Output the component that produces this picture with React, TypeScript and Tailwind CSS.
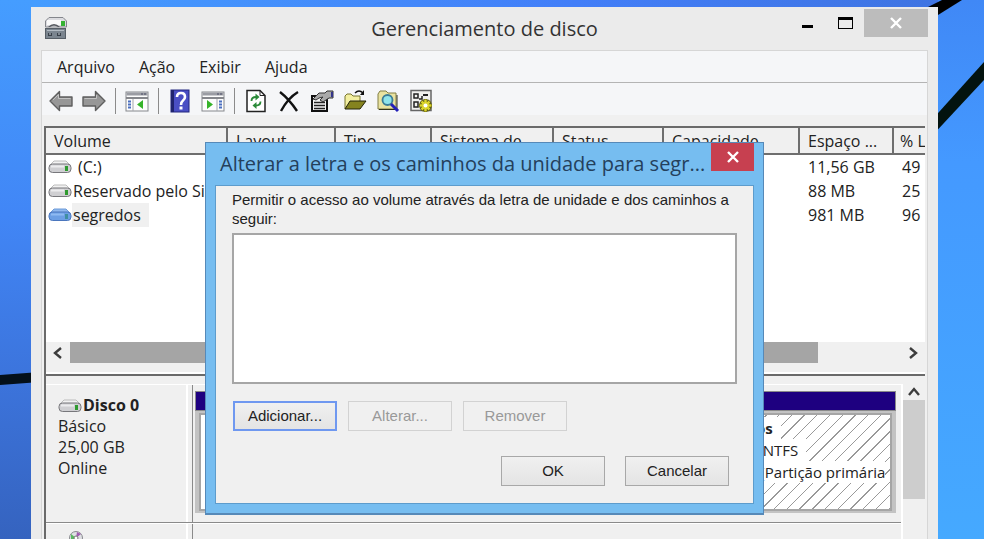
import React from 'react';

const VOLUMES = [
  { name: '(C:)', free: '11,56 GB', percent: '49', blue: false, selected: false },
  { name: 'Reservado pelo Sis', free: '88 MB', percent: '25', blue: false, selected: false },
  { name: 'segredos', free: '981 MB', percent: '96', blue: true, selected: true },
];

const DriveIcon: React.FC<{ blue?: boolean }> = ({ blue }) => (
  <svg className="h-4 w-6 shrink-0" viewBox="0 0 24 16" aria-hidden="true">
    <path d="M6 2 H18 L22 6 H2 Z" fill={blue ? '#8fb8ee' : '#f2f2f2'} stroke={blue ? '#6f9bd8' : '#bcbcbc'} />
    <rect x="1" y="5" width="22" height="8.500" rx="3.500" fill={blue ? '#6c9fe4' : '#cfcfd2'} stroke={blue ? '#4a76bd' : '#77777b'} />
    <path d="M3 7.500 H16" stroke={blue ? '#8fbaf2' : '#ececee'} strokeWidth="2" />
    <rect x="17" y="7" width="3" height="5" fill={blue ? '#3f8fa0' : '#2f9a2f'} />
  </svg>
);

const DiskStackIcon = () => (
  <svg className="h-6 w-6" viewBox="0 0 24 24" aria-hidden="true">
    <path d="M5 1.500 H19 L22.500 5 V11 H1.500 V5 Z" fill="#dcdce0" stroke="#84868c" />
    <path d="M3 4 H17 V9 H3 Z" fill="#fafafa" />
    <path d="M4 11 Q10 5 16 11 Z" fill="#55585e" />
    <path d="M6 11 Q10 8 14 11 Z" fill="#b4b6ba" />
    <rect x="17" y="5" width="4" height="5" fill="#35b233" />
    <rect x="1.500" y="12.500" width="20" height="10" fill="#7b858f" stroke="#565e66" />
    <path d="M3 14.500 H20" stroke="#b4bcc4" />
    <path d="M4 17 H8 V20 H4 Z M13 17 H17 V20 H13 Z" fill="#39414a" />
    <path d="M5 18 H7 M14 18 H16" stroke="#c9d0d6" />
  </svg>
);

const ArrowIcon: React.FC<{ right?: boolean }> = ({ right }) => (
  <svg className="h-6 w-6" viewBox="0 0 24 24" aria-hidden="true">
    <path
      d={right ? 'M23 12 L13.500 2.500 V8 H1 V17 H13.500 V21.500 Z' : 'M1 12 L10.500 2.500 V8 H23 V17 H10.500 V21.500 Z'}
      fill="#979797"
      stroke="#5e5e5e"
      strokeWidth="1.400"
      strokeLinejoin="round"
    />
    <path d={right ? 'M2.500 9.500 H14.500 V6' : 'M4 11 L9.500 5.500 V9.500 H21.500'} fill="none" stroke="#c2c2c2" />
  </svg>
);

const PaneIcon: React.FC<{ right?: boolean }> = ({ right }) => (
  <svg className="h-6 w-6" viewBox="0 0 24 24" aria-hidden="true">
    <rect x="1" y="3" width="22" height="19" fill="#fdfdfd" stroke="#85878c" />
    <rect x="1.500" y="3.500" width="21" height="3" fill="#9a9ca3" />
    <path d="M16 5 H18 M19 5 H21" stroke="#4a4c66" />
    <path d="M1 9 H23" stroke="#85878c" strokeWidth="2" />
    <path d={right ? 'M16 10 V22' : 'M8 10 V22'} stroke="#a5a7ad" />
    <path d={right ? 'M18 12.500 H21 M18 15.500 H21 M18 18.500 H21' : 'M3 12.500 H6 M3 15.500 H6 M3 18.500 H6'} stroke="#4a6fc0" strokeWidth="2" />
    <path d={right ? 'M6 11 L12 15.500 L6 20 Z' : 'M18 11 L12 15.500 L18 20 Z'} fill="#36b32a" />
  </svg>
);

const HelpIcon = () => (
  <svg className="h-6 w-6" viewBox="0 0 24 24" aria-hidden="true">
    <rect x="3" y="1" width="18" height="22" fill="#4a4fc4" stroke="#22267e" />
    <path d="M4.500 1 V23" stroke="#20246f" strokeWidth="3" />
    <path d="M9 8 Q9 4 13 4 Q17 4 17 8 Q17 10 15 11.500 Q13 13 13 16" fill="none" stroke="#fff" strokeWidth="2.600" />
    <rect x="11.500" y="17.500" width="3" height="3" fill="#fff" />
  </svg>
);

const RefreshIcon = () => (
  <svg className="h-6 w-6" viewBox="0 0 24 24" aria-hidden="true">
    <path d="M3 1.500 H16 L21 6.500 V22.500 H3 Z" fill="#fff" stroke="#222" strokeWidth="1.500" />
    <path d="M16 1.500 V6.500 H21" fill="none" stroke="#222" />
    <path d="M7.500 12 Q7.500 8 12 8" fill="none" stroke="#2a8a38" strokeWidth="1.800" />
    <path d="M11.500 4.500 L15.500 8 L11.500 11.500 Z" fill="#2a8a38" />
    <path d="M16.500 12.500 Q16.500 16.500 12 16.500" fill="none" stroke="#2a8a38" strokeWidth="1.800" />
    <path d="M12.500 13 L8.500 16.500 L12.500 20 Z" fill="#2a8a38" />
  </svg>
);

const DeleteIcon = () => (
  <svg className="h-6 w-6" viewBox="0 0 24 24" aria-hidden="true">
    <path d="M3 3 Q12 10 20 22 M21 3 Q11 9 4 22" fill="none" stroke="#111" strokeWidth="2.400" />
  </svg>
);

const PropertiesIcon = () => (
  <svg className="h-6 w-6" viewBox="0 0 24 24" aria-hidden="true">
    <path d="M2 7 H17 V22 H2 Z" fill="#f4f4f4" stroke="#111" strokeWidth="2" />
    <path d="M4 13.500 H15 M4 16.500 H15 M4 19.500 H15" stroke="#222" strokeWidth="1.500" />
    <path d="M3 10 L9 4 H15 L17 2 H23 V9 H19 L13 13 L10 11 L13 8 L9 9 L6 11 Z" fill="#a9a9a9" stroke="#333" />
    <rect x="21" y="3" width="2" height="5" fill="#34358a" />
  </svg>
);

const OpenIcon = () => (
  <svg className="h-6 w-6" viewBox="0 0 24 24" aria-hidden="true">
    <path d="M2 20 V7 L4 5 H8 L10 7 H17 V12" fill="#f3efa0" stroke="#77752f" />
    <path d="M2 20 L7 12 H23 L17 20 Z" fill="#85831f" stroke="#22220a" />
    <path d="M12 4 Q16 0 20 4" fill="none" stroke="#111" strokeWidth="1.500" />
    <path d="M21 1 V6 H17 Z" fill="#111" />
  </svg>
);

const SearchIcon = () => (
  <svg className="h-6 w-6" viewBox="0 0 24 24" aria-hidden="true">
    <path d="M2 20 V5 L4 2 H10 L12 4 H20 V20 Z" fill="#e9e2a0" stroke="#827f45" />
    <path d="M3 20.500 H21 V6" fill="none" stroke="#33331a" />
    <circle cx="11.500" cy="11" r="5" fill="#8fe3ea" stroke="#3a7c96" strokeWidth="1.800" />
    <path d="M15 15 L22 22" stroke="#2420b8" strokeWidth="3" />
  </svg>
);

const SettingsIcon = () => (
  <svg className="h-6 w-6" viewBox="0 0 24 24" aria-hidden="true">
    <path d="M2 1.500 H22 V21.500 H2 Z" fill="#f1f1ee" stroke="#666" strokeWidth="1.500" />
    <path d="M5 5 H9 V9 H5 Z M5 13 H9 V18 H5 Z M13 7 V10 H10" fill="none" stroke="#222" strokeWidth="1.500" />
    <path d="M14 6 H19" stroke="#222" strokeWidth="2" />
    <path d="M16.500 10 V23 M10 16.500 H23 M12 12 L21 21 M21 12 L12 21" stroke="#55540c" strokeWidth="4" />
    <path d="M16.500 10.500 V22.500 M10.500 16.500 H22.500 M12.500 12.500 L20.500 20.500 M20.500 12.500 L12.500 20.500" stroke="#dcd52c" strokeWidth="2.500" />
    <circle cx="16.500" cy="16.500" r="2" fill="#fff" />
  </svg>
);

const DiscIcon = () => (
  <svg className="h-6 w-6" viewBox="0 0 24 24" aria-hidden="true">
    <circle cx="14" cy="8" r="6.500" fill="#dfe0e4" stroke="#8a8b90" />
    <path d="M14 8 L9 4 L9 11 Z" fill="#58b860" />
    <path d="M14 8 L15 2 L19 4 Z" fill="#a05ab0" />
    <circle cx="14" cy="8" r="2" fill="#fff" stroke="#777" />
  </svg>
);

const Chevron: React.FC<{ d: string }> = ({ d }) => (
  <svg className="h-3 w-3" viewBox="0 0 12 12" aria-hidden="true">
    <path d={d} fill="none" stroke="#3c3c3c" strokeWidth="2.400" />
  </svg>
);

const Cross: React.FC = () => (
  <svg className="h-3 w-3" viewBox="0 0 12 12" aria-hidden="true">
    <path d="M1 1 L11 11 M11 1 L1 11" stroke="#fff" strokeWidth="2.400" />
  </svg>
);

const Wallpaper = () => (
  <svg className="absolute inset-0 h-full w-full" viewBox="0 0 984 539" preserveAspectRatio="none" aria-hidden="true">
    <defs>
      <linearGradient id="left" x1="0" y1="0" x2="0" y2="1">
        <stop offset="0" stopColor="#459dff" />
        <stop offset="0.400" stopColor="#4186f6" />
        <stop offset="0.700" stopColor="#3c74dc" />
        <stop offset="1" stopColor="#3563bf" />
      </linearGradient>
      <linearGradient id="top" x1="0" y1="0" x2="1" y2="0">
        <stop offset="0" stopColor="#459dff" />
        <stop offset="0.600" stopColor="#427ef8" />
        <stop offset="1" stopColor="#3f74e2" />
      </linearGradient>
      <linearGradient id="right" x1="0" y1="0" x2="0" y2="1">
        <stop offset="0" stopColor="#4088f6" />
        <stop offset="0.300" stopColor="#4499ff" />
        <stop offset="1" stopColor="#45a9ff" />
      </linearGradient>
    </defs>
    <rect width="984" height="539" fill="url(#left)" />
    <rect x="31" width="907" height="20" fill="url(#top)" />
    <rect x="938" width="46" height="539" fill="url(#right)" />
    <path d="M0 375 L40 372 V382 L0 385 Z" fill="#04101a" />
    <path d="M926 8 L942 0 H962 L930 20 Z" fill="#000" />
    <path d="M984 62 L930 122 V138 L984 80 Z" fill="#03130f" />
  </svg>
);

const iconButton = 'flex h-6 w-6 items-center justify-center';
const separator = 'h-[26px] w-px bg-[#8b8b8b]';
const dialogButton = 'h-[30px] w-[104px] border text-[15px]';

const TitleBar = () => (
  <header className="flex h-[43px] items-start">
    <div className="w-[150px] pt-[9px] pl-[13px]"><DiskStackIcon /></div>
    <h1 className="flex-1 pt-[7px] text-center text-[20px] leading-[30px] text-[#333]">Gerenciamento de disco</h1>
    <div className="mr-[10px] flex items-start pt-[2px]">
      <button type="button" aria-label="Minimizar" className="flex h-7 w-[38px] items-center justify-center pt-[6px]">
        <span className="h-[3px] w-[11px] bg-black"></span>
      </button>
      <button type="button" aria-label="Maximizar" className="flex h-7 w-[38px] items-center justify-center">
        <span className="h-3 w-[15px] border border-t-[3px] border-black"></span>
      </button>
      <button type="button" aria-label="Fechar" className="flex h-7 w-16 items-center justify-center bg-[#bcbcbc]"><Cross /></button>
    </div>
  </header>
);

const Toolbar = () => (
  <div className="flex h-8 items-center gap-[9px] bg-[#f5f6f8] pt-1 pl-[7px]">
    <button type="button" aria-label="Voltar" className={iconButton}><ArrowIcon /></button>
    <button type="button" aria-label="Avançar" className={iconButton}><ArrowIcon right /></button>
    <span className={separator}></span>
    <button type="button" aria-label="Mostrar árvore" className={iconButton}><PaneIcon /></button>
    <span className={separator}></span>
    <button type="button" aria-label="Ajuda" className={iconButton}><HelpIcon /></button>
    <button type="button" aria-label="Mostrar painel" className={iconButton}><PaneIcon right /></button>
    <span className={separator}></span>
    <button type="button" aria-label="Atualizar" className={iconButton}><RefreshIcon /></button>
    <button type="button" aria-label="Excluir" className={iconButton}><DeleteIcon /></button>
    <button type="button" aria-label="Propriedades" className={iconButton}><PropertiesIcon /></button>
    <button type="button" aria-label="Abrir" className={iconButton}><OpenIcon /></button>
    <button type="button" aria-label="Localizar" className={iconButton}><SearchIcon /></button>
    <button type="button" aria-label="Configurações" className={iconButton}><SettingsIcon /></button>
  </div>
);

const heading = 'overflow-hidden border-r-2 border-b-2 border-[#6e6e6e] p-0 pl-2 text-left font-normal whitespace-nowrap';

const VolumeList = () => (
  <section className="flex h-[250px] flex-col border-t-2 border-b-2 border-l-2 border-[#6a6a6a] bg-white">
    <div className="min-h-0 flex-1 overflow-hidden">
      <table className="w-full table-fixed border-separate border-spacing-0 text-base leading-6">
        <thead>
          <tr className="h-[27px] bg-[#f0f0f0]">
            <th className={`${heading} w-[182px]`}>Volume</th>
            <th className={`${heading} w-[108px]`}>Layout</th>
            <th className={`${heading} w-24`}>Tipo</th>
            <th className={`${heading} w-[122px]`}>Sistema de</th>
            <th className={`${heading} w-[110px]`}>Status</th>
            <th className={`${heading} w-[136px]`}>Capacidade</th>
            <th className={`${heading} w-[94px]`}>Espaço ...</th>
            <th className="border-b-2 border-[#6e6e6e] p-0 pl-[6px] text-left font-normal whitespace-nowrap">% L</th>
          </tr>
        </thead>
        <tbody>
          {VOLUMES.map((volume) => (
            <tr key={volume.name} className="h-6">
              <td className="p-0 whitespace-nowrap">
                <div className="flex items-center pl-[2px]">
                  <DriveIcon blue={volume.blue} />
                  <span className={volume.selected ? 'bg-[#f0f0f0] pr-2 pl-px' : volume.name === '(C:)' ? 'pl-[6px]' : 'pl-px'}>{volume.name}</span>
                </div>
              </td>
              <td colSpan={5}></td>
              <td className="p-0 pl-2 whitespace-nowrap">{volume.free}</td>
              <td className="p-0 pl-2 whitespace-nowrap">{volume.percent}</td>
            </tr>
          ))}
        </tbody>
      </table>
    </div>
    <div className="flex h-[21px] shrink-0 bg-[#f0f0f0]">
      <button type="button" aria-label="Rolar para a esquerda" className="flex w-6 items-center justify-center"><Chevron d="M9 1 L3 6 L9 11" /></button>
      <div className="flex-1"><div className="h-full w-[90%] bg-[#a5a5a5]"></div></div>
      <button type="button" aria-label="Rolar para a direita" className="flex w-6 items-center justify-center"><Chevron d="M3 1 L9 6 L3 11" /></button>
    </div>
    <div className="h-[11px] shrink-0 border-b-2 border-white bg-[#f0f0f0]"></div>
  </section>
);

const DiskPane = () => (
  <section className="flex min-h-0 flex-1 border-l-2 border-[#6a6a6a] pt-2">
    <div className="min-w-0 flex-1 border-t border-white">
      <div className="flex h-[138px] border-b border-[#8a8a8a]">
        <div className="w-[142px] shrink-0 border-r-2 border-white pt-[10px] pl-3 text-base leading-[21px]">
          <div className="flex items-center">
            <DriveIcon />
            <strong className="pl-px">Disco 0</strong>
          </div>
          <p>Básico</p>
          <p>25,00 GB</p>
          <p>Online</p>
        </div>
        <div className="ml-1 flex min-w-0 flex-1 flex-col border-l border-[#8a8a8a] pt-[6px] pb-[9px] pl-[2px]">
          <div className="mr-[5px] h-5 border border-[#8a8a8a] bg-[#1e0080]"></div>
          <div className="mr-[5px] flex min-h-0 flex-1 gap-1 bg-[#c3c3c3] px-1 py-[2px]">
            <div className="flex-1 border-2 border-[#a5a5a5] bg-white"></div>
            <div className="w-[192px] shrink-0 overflow-hidden border-2 border-[#a5a5a5] bg-[repeating-linear-gradient(135deg,#999_0_1px,#fff_1px_9px)] pt-[2px] pl-1 text-[15px] leading-[22px] whitespace-nowrap">
              <p><strong className="inline-block bg-white pr-2">segredos</strong></p>
              <p><span className="inline-block bg-white pr-2">981 MB NTFS</span></p>
              <p><span className="inline-block bg-white">Íntegro (Partição primária</span></p>
            </div>
          </div>
        </div>
      </div>
      <div className="flex h-full border-t border-white">
        <div className="w-[142px] shrink-0 border-r-2 border-white pt-[6px] pl-4"><DiscIcon /></div>
        <div className="ml-1 flex-1 border-l border-[#8a8a8a]"></div>
      </div>
    </div>
    <div className="w-6 shrink-0 border-l-2 border-white">
      <button type="button" aria-label="Rolar para cima" className="flex h-4 w-full items-center justify-center"><Chevron d="M1 9 L6 3 L11 9" /></button>
      <div className="h-[99px] bg-[#cdcdcd]"></div>
    </div>
  </section>
);

const Dialog = () => (
  <div role="dialog" aria-labelledby="dialog-title" className="w-[559px] max-w-full border border-b-2 border-[#5689b8] bg-[#76bdf0] px-[9px] pb-[9px]">
    <div className="flex h-[42px] items-start">
      <h2 id="dialog-title" className="min-w-0 flex-1 pl-[5px] text-[20px] leading-[42px] whitespace-nowrap text-[#24405c]">
        Alterar a letra e os caminhos da unidade para segr...
      </h2>
      <button type="button" aria-label="Fechar" className="flex h-7 w-[43px] items-center justify-center bg-[#c74050]"><Cross /></button>
    </div>
    <div className="border border-[#5d9ccc] bg-[#f0f0f0] px-4 pt-1 pb-[17px] font-['Liberation_Sans',sans-serif]">
      <label htmlFor="paths" className="block text-[15px] leading-[19px] text-[#222]">
        Permitir o acesso ao volume através da letra de unidade e dos caminhos a seguir:
      </label>
      <select id="paths" size={6} className="mt-[5px] block h-[151px] w-full appearance-none overflow-hidden border-2 border-[#a6a6a6] bg-white outline-none"></select>
      <div className="mt-[17px] flex gap-[11px] pl-px">
        <button type="button" className={`${dialogButton} border-2 border-[#6f98f0] bg-linear-to-b from-[#f0f0f0] to-[#e4e4e4] text-[#222]`}>Adicionar...</button>
        <button type="button" disabled className={`${dialogButton} border-[#d2d2d2] text-[#999]`}>Alterar...</button>
        <button type="button" disabled className={`${dialogButton} border-[#d2d2d2] text-[#999]`}>Remover</button>
      </div>
      <div className="mt-[25px] flex justify-end gap-5 pr-2">
        <button type="button" className={`${dialogButton} border-[#a8a8a8] bg-linear-to-b from-[#f0f0f0] to-[#e4e4e4] text-[#222]`}>OK</button>
        <button type="button" className={`${dialogButton} border-[#a8a8a8] bg-linear-to-b from-[#f0f0f0] to-[#e4e4e4] text-[#222]`}>Cancelar</button>
      </div>
    </div>
  </div>
);

const App: React.FC = () => {
  return (
    <div className="relative flex h-screen flex-col overflow-hidden bg-[#4499ff] pt-[7px] pr-[46px] pl-[31px] font-['Open_Sans',sans-serif] text-[#222]">
      <Wallpaper />
      <main className="relative flex min-h-0 flex-1 flex-col bg-[#ebebeb]">
        <TitleBar />
        <div className="mx-[10px] flex min-h-0 flex-1 flex-col border-x border-t border-[#d6d6d6] bg-[#f0f0f0]">
          <nav className="flex h-8 items-center gap-6 border-b border-[#b4b4b4] bg-[#f5f6f8] pl-[15px] text-base">
            <button type="button">Arquivo</button>
            <button type="button">Ação</button>
            <button type="button">Exibir</button>
            <button type="button">Ajuda</button>
          </nav>
          <Toolbar />
          <div className="flex min-h-0 flex-1 flex-col pt-[11px] pr-[2px] pl-[2px]">
            <VolumeList />
            <DiskPane />
          </div>
        </div>
        <div className="absolute inset-x-0 top-[135px] flex justify-center">
          <Dialog />
        </div>
      </main>
    </div>
  );
};

export default App;
